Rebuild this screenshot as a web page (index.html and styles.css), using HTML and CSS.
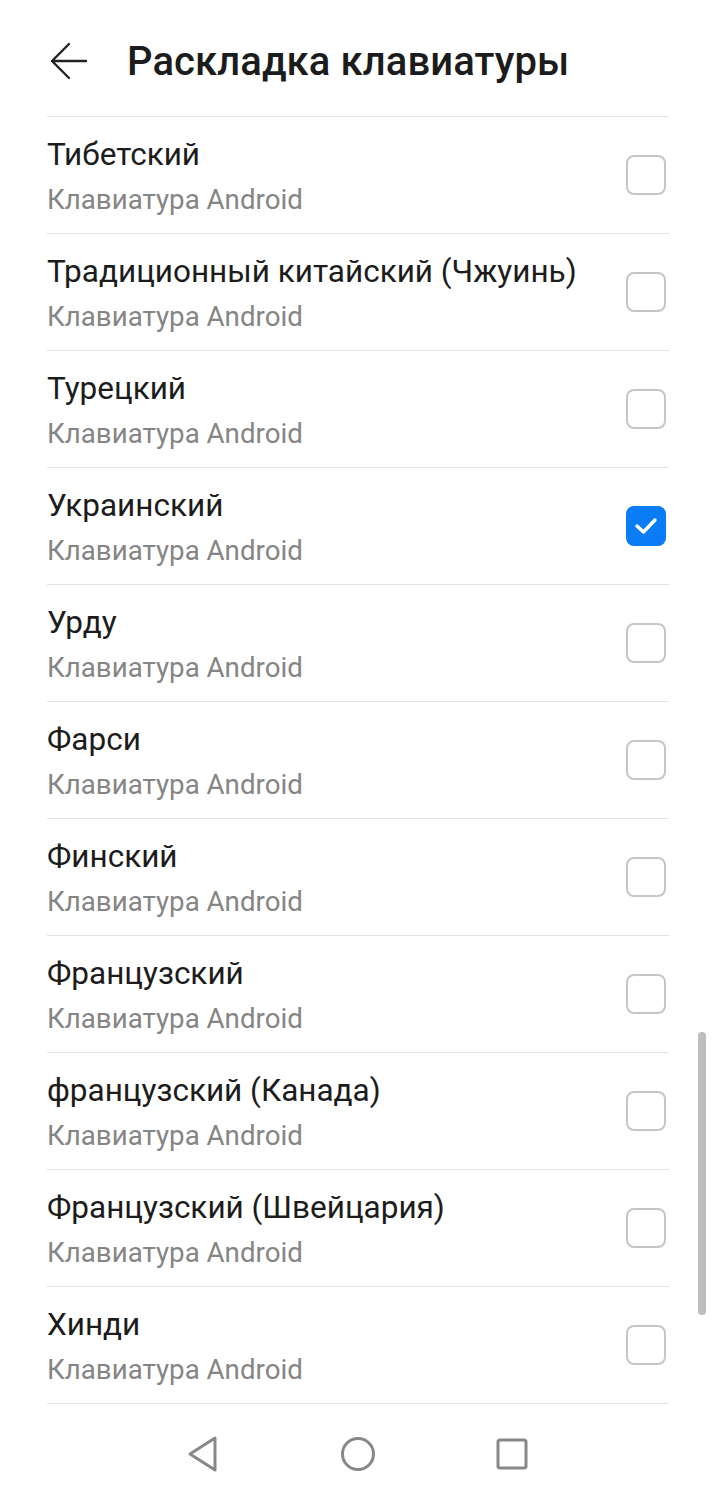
FILE: index.html
```html
<!DOCTYPE html>
<html lang="ru">
<head>
<meta charset="utf-8">
<link rel="stylesheet" href="styles.css">
</head>
<body>
<div class="screen">
  <header class="appbar">
    <svg class="back" width="38" height="40" viewBox="0 0 38 40"><path d="M2 20 H36 M2 20 L19 3 M2 20 L19 37" fill="none" stroke="#222" stroke-width="2.4" stroke-linecap="round" stroke-linejoin="round"/></svg>
    <h1 class="title">Раскладка клавиатуры</h1>
  </header>
  <ul class="list">
    <li class="row"><div class="text"><div class="name">Тибетский</div><div class="sub">Клавиатура Android</div></div><span class="box"></span></li>
    <li class="row"><div class="text"><div class="name">Традиционный китайский (Чжуинь)</div><div class="sub">Клавиатура Android</div></div><span class="box"></span></li>
    <li class="row"><div class="text"><div class="name">Турецкий</div><div class="sub">Клавиатура Android</div></div><span class="box"></span></li>
    <li class="row"><div class="text"><div class="name">Украинский</div><div class="sub">Клавиатура Android</div></div><span class="box checked"><svg width="26" height="20" viewBox="0 0 26 20"><path d="M4 10 L10.5 16 L22 4" fill="none" stroke="#fff" stroke-width="3.4" stroke-linecap="round" stroke-linejoin="round"/></svg></span></li>
    <li class="row"><div class="text"><div class="name">Урду</div><div class="sub">Клавиатура Android</div></div><span class="box"></span></li>
    <li class="row"><div class="text"><div class="name">Фарси</div><div class="sub">Клавиатура Android</div></div><span class="box"></span></li>
    <li class="row"><div class="text"><div class="name">Финский</div><div class="sub">Клавиатура Android</div></div><span class="box"></span></li>
    <li class="row"><div class="text"><div class="name">Французский</div><div class="sub">Клавиатура Android</div></div><span class="box"></span></li>
    <li class="row"><div class="text"><div class="name">французский (Канада)</div><div class="sub">Клавиатура Android</div></div><span class="box"></span></li>
    <li class="row"><div class="text"><div class="name">Французский (Швейцария)</div><div class="sub">Клавиатура Android</div></div><span class="box"></span></li>
    <li class="row"><div class="text"><div class="name">Хинди</div><div class="sub">Клавиатура Android</div></div><span class="box"></span></li>
  </ul>
  <nav class="navbar">
    <svg width="34" height="38" viewBox="0 0 34 38"><path d="M28 3 L28 35 L3 19 Z" fill="none" stroke="#888" stroke-width="3" stroke-linejoin="round"/></svg>
    <svg width="36" height="36" viewBox="0 0 36 36"><circle cx="18" cy="18" r="15.5" fill="none" stroke="#888" stroke-width="3"/></svg>
    <svg width="34" height="34" viewBox="0 0 34 34"><rect x="3" y="3" width="28" height="28" rx="2" fill="none" stroke="#888" stroke-width="3"/></svg>
  </nav>
  <div class="scrollbar"></div>
</div>
</body>
</html>
```
FILE: styles.css
```css
* { box-sizing: border-box; }
html, body { margin: 0; padding: 0; background: #fff; }
body { font-family: Roboto, "Noto Sans", sans-serif; }
.screen { position: relative; width: 718px; height: 1494px; overflow: hidden; background: #fff; }
.appbar { height: 116px; display: flex; align-items: center; padding-left: 50px; padding-top: 6px; }
.back { flex: none; }
.title { margin: 0 0 0 39px; font-size: 40px; font-weight: 500; color: #1c1c1c; letter-spacing: 0.1px; }
.list { list-style: none; margin: 0 49px 0 47px; padding: 0; border-top: 1px solid #e2e2e2; }
.row { height: 117px; border-bottom: 1px solid #e2e2e2; display: flex; align-items: center; justify-content: space-between; }
.text { display: flex; flex-direction: column; padding-top: 5px; }
.name { font-size: 31.5px; color: #1c1c1c; line-height: 38px; }
.sub { font-size: 27.7px; color: #858585; line-height: 38px; margin-top: 7px; }
.box { flex: none; width: 40px; height: 40px; border: 2px solid #c6c6c6; border-radius: 8px; margin-right: 3px; display: flex; align-items: center; justify-content: center; }
.box.checked { background: #0a7cf6; border-color: #0a7cf6; }
.navbar { height: 90px; display: flex; align-items: center; gap: 119px; padding-left: 187px; padding-top: 10px; }
.scrollbar { position: absolute; left: 698px; top: 1032px; width: 8px; height: 283px; border-radius: 4px; background: #bdbdbd; }
```
